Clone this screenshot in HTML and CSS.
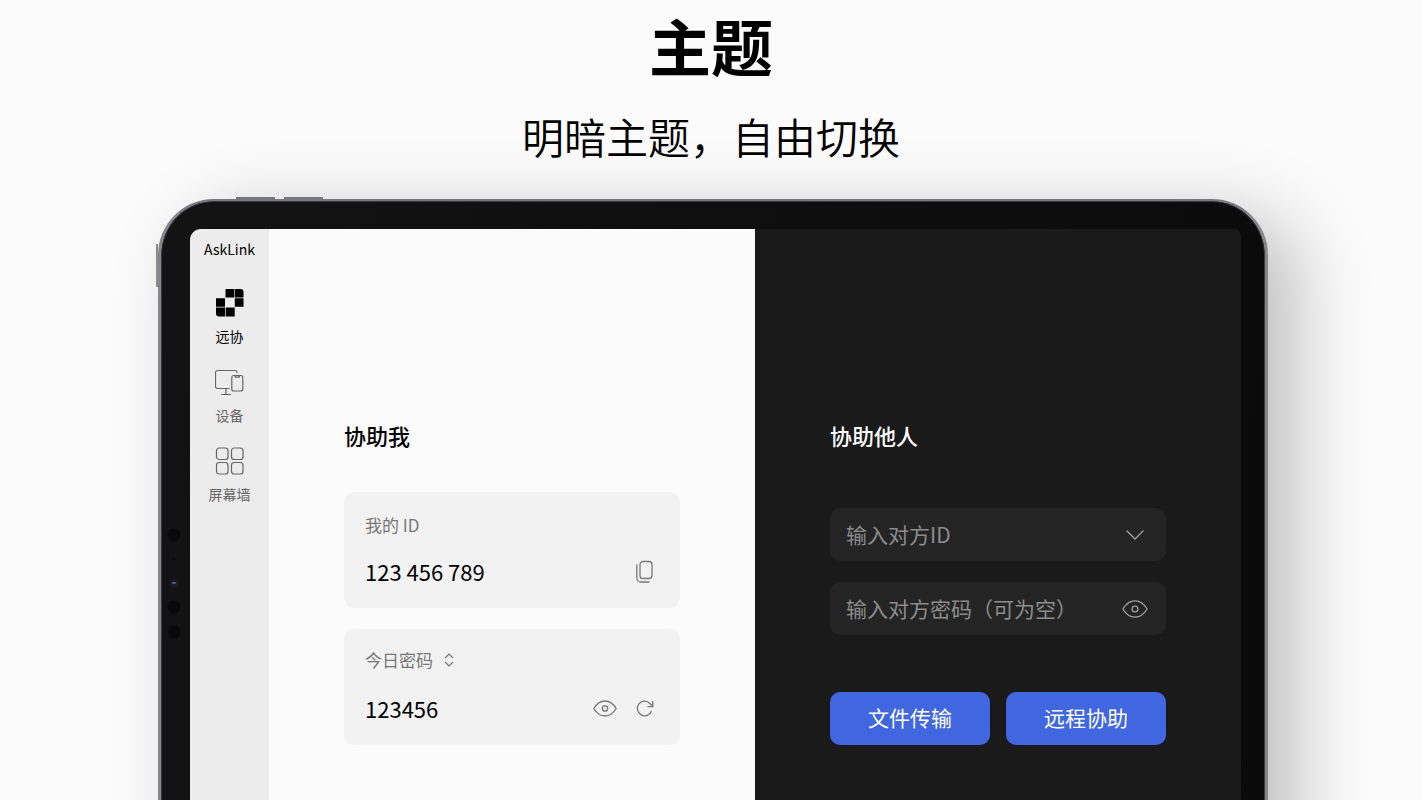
FILE: index.html
```
<!DOCTYPE html>
<html lang="zh-CN">
<head>
  <meta charset="UTF-8">
  <meta name="viewport" content="width=device-width, initial-scale=1">
  <title>AskLink</title>
  <link rel="stylesheet" href="styles.css">
</head>
<body>

  <header class="intro">
    <h1>主题</h1>
    <p>明暗主题，自由切换</p>
  </header>

  <div class="device">
    <!-- Hardware buttons and sensors -->
    <span class="key key-up"></span>
    <span class="key key-down"></span>
    <span class="key key-power"></span>
    <svg class="sensors" width="16" height="112" viewBox="0 0 16 112">
      <circle cx="8" cy="8" r="6.5" fill="#090909"/>
      <circle cx="8" cy="32" r="1.5" fill="#0b0b0b"/>
      <circle cx="8" cy="56" r="5" fill="#191919"/>
      <rect x="6" y="55" width="4" height="2" rx="1" fill="#4a4fc0"/>
      <circle cx="8" cy="80" r="6.5" fill="#090909"/>
      <circle cx="8" cy="105" r="6.5" fill="#090909"/>
    </svg>

    <div class="screen">
      <!-- Sidebar -->
      <nav class="sidebar">
        <div class="brand">AskLink</div>
        <a href="#assist" class="nav-item active">
          <svg width="30" height="30" viewBox="0 0 30 30" fill="currentColor">
            <path d="M10.5 1H19v8.5h-8.500zM19.600 1h5.900a3 3 0 0 1 3 3v5.500h-8.900zM1 10.200h9v8.600H1zM19.800 10.200h8.700v8.600h-8.700zM1 19.500h9v9H4a3 3 0 0 1-3-3zM10.700 19.500h9v9h-9z"/>
          </svg>
          <span>远协</span>
        </a>
        <a href="#devices" class="nav-item">
          <svg width="30" height="30" viewBox="0 0 30 30" fill="none" stroke="currentColor" stroke-width="1.2">
            <path d="M14.500 21.500H2.500a2 2 0 0 1-2-2V5.500a2 2 0 0 1 2-2H20a2 2 0 0 1 2 2v.500M11 21.500v6M6 27.500h10"/>
            <rect x="16.800" y="8.500" width="11" height="15.500" rx="2"/>
            <path d="M20.300 9v1.200h4V9"/>
          </svg>
          <span>设备</span>
        </a>
        <a href="#wall" class="nav-item">
          <svg width="30" height="30" viewBox="0 0 30 30" fill="none" stroke="currentColor" stroke-width="1.2">
            <rect x="1.500" y="2" width="11.500" height="11.500" rx="2.800"/>
            <rect x="16.500" y="2" width="11.500" height="11.500" rx="2.800"/>
            <rect x="1.500" y="16.500" width="11.500" height="11.500" rx="2.800"/>
            <rect x="16.500" y="16.500" width="11.500" height="11.500" rx="2.800"/>
          </svg>
          <span>屏幕墙</span>
        </a>
      </nav>

      <!-- Light theme -->
      <section class="panel light">
        <h2>协助我</h2>
        <div class="card">
          <div class="card-label">我的 ID</div>
          <div class="card-row">
            <span class="value">123 456 789</span>
            <button type="button" class="icon-button" aria-label="复制">
              <svg width="24" height="24" viewBox="0 0 24 24" fill="none" stroke="currentColor" stroke-width="1.3">
                <rect x="7" y="2.500" width="12" height="17" rx="3"/>
                <path d="M3.800 5.500V19a4 4 0 0 0 4 4h8.500"/>
              </svg>
            </button>
          </div>
        </div>
        <div class="card password-card">
          <div class="card-label">
            <select class="period" aria-label="密码类型">
              <option>今日密码</option>
            </select>
            <svg width="12" height="16" viewBox="0 0 12 16" fill="none" stroke="currentColor" stroke-width="1.2">
              <path d="M2 6l4-4 4 4M2 10l4 4 4-4"/>
            </svg>
          </div>
          <div class="card-row">
            <span class="value">123456</span>
            <button type="button" class="icon-button" aria-label="显示密码">
              <svg width="24" height="24" viewBox="0 0 24 24" fill="none" stroke="currentColor" stroke-width="1.3">
                <path d="M.8 12.500c3-5 6.900-7.500 11.200-7.500s8.200 2.500 11.200 7.500c-3 5-6.900 7.500-11.200 7.500S3.800 17.500.8 12.500z"/>
                <circle cx="12" cy="12.500" r="2.700"/>
              </svg>
            </button>
            <button type="button" class="icon-button" aria-label="刷新">
              <svg width="24" height="24" viewBox="0 0 24 24" fill="none" stroke="currentColor" stroke-width="1.3">
                <path d="M18.500 15A7.300 7.300 0 1 1 17 7.500l2.500 2.800M19.800 5v5.600h-5.300"/>
              </svg>
            </button>
          </div>
        </div>
      </section>

      <!-- Dark theme -->
      <section class="panel dark">
        <h2>协助他人</h2>
        <form class="connect">
          <div class="field">
            <input type="text" placeholder="输入对方ID" aria-label="对方ID">
            <button type="button" class="icon-button" aria-label="展开">
              <svg width="26" height="26" viewBox="0 0 26 26" fill="none" stroke="currentColor" stroke-width="1.3">
                <path d="M4.500 8.500l8.500 8.500 8.500-8.500"/>
              </svg>
            </button>
          </div>
          <div class="field">
            <input type="password" placeholder="输入对方密码（可为空）" aria-label="对方密码">
            <button type="button" class="icon-button" aria-label="显示密码">
              <svg width="26" height="26" viewBox="0 0 24 24" fill="none" stroke="currentColor" stroke-width="1.2">
                <path d="M.8 12C3.800 7 7.700 4.500 12 4.500S20.200 7 23.200 12c-3 5-6.900 7.500-11.200 7.500S3.800 17 .8 12z"/>
                <circle cx="12" cy="12" r="2.700"/>
              </svg>
            </button>
          </div>
          <div class="actions">
            <button type="button" class="button">文件传输</button>
            <button type="button" class="button">远程协助</button>
          </div>
        </form>
      </section>
    </div>
  </div>

</body>
</html>
```
FILE: styles.css
```
* {
  box-sizing: border-box;
}
body {
  display: flex;
  flex-direction: column;
  height: 100vh;
  margin: 0;
  overflow: hidden;
  background-color: #fbfbfb;
  color: #000;
  font-family: "Noto Sans CJK SC", sans-serif;
}
h1, h2, p {
  margin: 0;
}
button, input, select {
  padding: 0;
  border: none;
  background: none;
  color: inherit;
  font: inherit;
}
button {
  cursor: pointer;
}
svg {
  display: block;
  flex: none;
}

.intro {
  height: 199px;
  text-align: center;
}
.intro h1 {
  font-size: 62px;
  line-height: 90px;
  font-weight: 700;
}
.intro p {
  position: relative;
  z-index: 1;
  margin-top: 16px;
  font-size: 42px;
  line-height: 60px;
  font-weight: 350;
}

/* Tablet frame, runs off the bottom of the window */
.device {
  position: relative;
  display: flex;
  flex: 1;
  margin: 0 154px -80px 158px;
  padding: 27px 24px 0 29px;
  border: 3px solid #85868c;
  border-top-width: 2px;
  border-top-color: #77787e;
  border-radius: 56px 56px 0 0;
  background: linear-gradient(100deg, #131313, #0a0a0a) padding-box;
  box-shadow: inset 0 0 0 1px #3a3b40, 30px 18px 75px rgba(0, 0, 0, 0.24);
}
.device .screen {
  margin-top: 1px;
}
.key {
  position: absolute;
  background-color: #75777f;
}
.key-up, .key-down {
  top: -4px;
  width: 39px;
  height: 2px;
}
.key-up {
  left: 75px;
}
.key-down {
  left: 123px;
}
.key-power {
  top: 43px;
  left: -5px;
  width: 2px;
  height: 43px;
  background-color: #8b8b8e;
}
.sensors {
  position: absolute;
  top: 326px;
  left: 5px;
}

.screen {
  display: flex;
  flex: 1;
  overflow: hidden;
  border-radius: 11px 7px 0 0;
}
.sidebar {
  display: flex;
  flex-direction: column;
  align-items: center;
  width: 79px;
  padding-top: 9px;
  background-color: #ececec;
  font-size: 14px;
  line-height: 22px;
}
.brand {
  margin-bottom: 28px;
}
.nav-item {
  display: flex;
  flex-direction: column;
  align-items: center;
  gap: 7px;
  margin-bottom: 20px;
  color: #666;
  text-decoration: none;
}
.nav-item.active {
  color: #000;
}

.panel {
  flex: 1;
  min-width: 0;
  padding: 189px 75px 0;
}
.panel h2 {
  font-size: 22px;
  line-height: 34px;
  font-weight: 500;
}
.light {
  background-color: #fbfbfb;
}
.dark {
  background-color: #1a1a1a;
  color: #fff;
}

.card {
  height: 116px;
  margin-top: 21px;
  padding: 20px 23px 0 21px;
  border-radius: 10px;
  background-color: #f2f2f2;
}
h2 + .card {
  margin-top: 40px;
}
.card-label {
  display: flex;
  align-items: center;
  gap: 10px;
  height: 26px;
  margin-bottom: 17px;
  color: #777;
  font-size: 17px;
  line-height: 26px;
}
.password-card {
  padding-top: 18px;
}
.password-card .card-label {
  margin-bottom: 19px;
}
.period {
  appearance: none;
  height: 26px;
}
.card-row {
  display: flex;
  align-items: center;
  gap: 16px;
}
.value {
  flex: 1;
  font-size: 22px;
  line-height: 32px;
}
.icon-button {
  color: #777;
}

.connect {
  display: flex;
  flex-direction: column;
  gap: 21px;
  margin-top: 56px;
}
.field {
  display: flex;
  align-items: center;
  height: 53px;
  padding: 0 18px 0 16px;
  border-radius: 10px;
  background-color: #242424;
}
.field input {
  flex: 1;
  min-width: 0;
  padding-bottom: 1px;
  outline: none;
  font-size: 21px;
  line-height: 31px;
}
.field input::placeholder {
  color: #8c8c8c;
}
.field .icon-button {
  color: #a0a0a0;
}
.actions {
  display: flex;
  gap: 16px;
  margin-top: 36px;
}
.button {
  flex: 1;
  height: 53px;
  padding-bottom: 3px;
  border-radius: 10px;
  background-color: #4067e0;
  color: #fff;
  font-size: 21px;
}
```
